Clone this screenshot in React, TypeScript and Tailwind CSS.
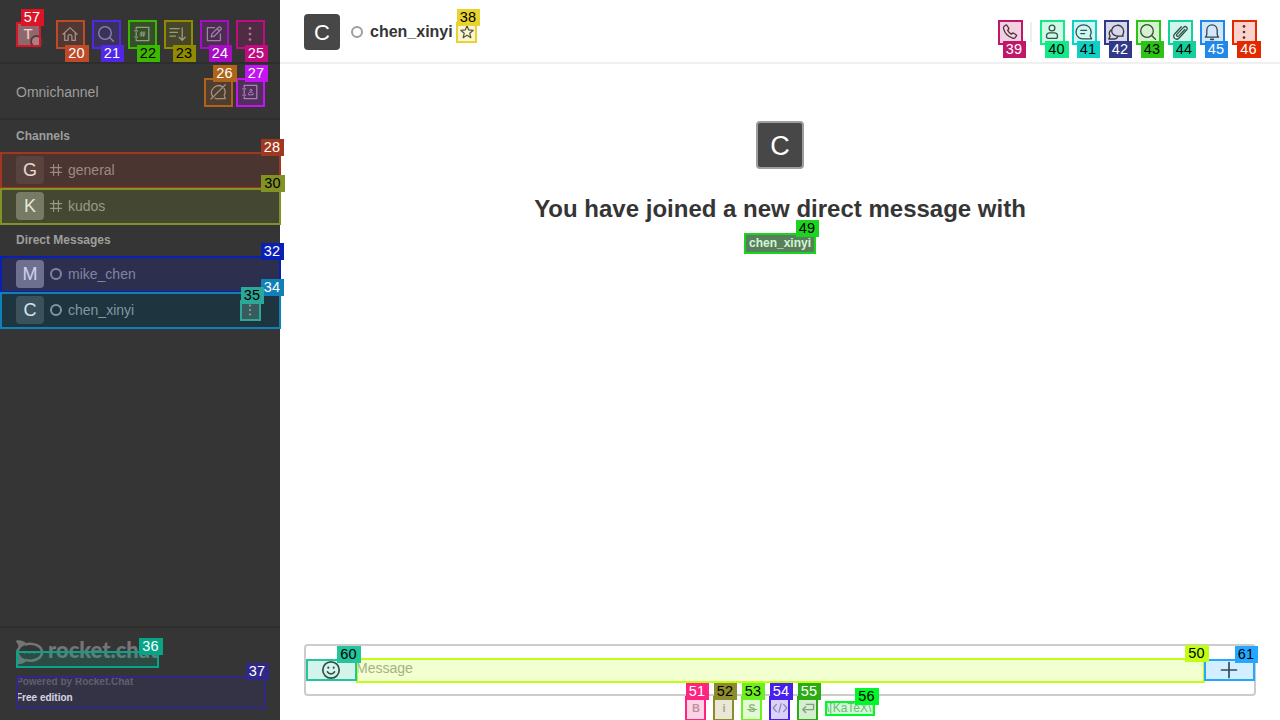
import type { ReactNode } from "react";

function Icon({ size = 20, width = 1.3, children }: { size?: number; width?: number; children: ReactNode }) {
  return (
    <svg
      width={size}
      height={size}
      viewBox="0 0 20 20"
      fill="none"
      stroke="currentColor"
      strokeWidth={width}
      strokeLinecap="round"
      strokeLinejoin="round"
      className="shrink-0"
    >
      {children}
    </svg>
  );
}

const Home = () => (
  <Icon>
    <path d="M3 10.2 10 3.6l7 6.6M4.7 8.8v7.6h3.4v-3.8a1.9 1.9 0 0 1 3.8 0v3.8h3.4V8.8" />
  </Icon>
);
const Search = () => (
  <Icon>
    <circle cx="9" cy="9" r="6.3" />
    <path d="m13.6 13.6 3.9 3.6" />
  </Icon>
);
const Directory = () => (
  <Icon>
    <path d="M4.2 5.2V3.4h12.6v13.2H4.2v-1.8M4.2 8.6v2.8M2.8 6.9h2.8M2.8 13.1h2.8" />
    <path d="M9.6 7.6 9.2 12.4M12 7.6l-.4 4.8M8.2 9h4.8M8 11h4.8" strokeWidth="1" />
  </Icon>
);
const Sort = () => (
  <Icon>
    <path d="M2 4.6h9.2M2 8.4h7.4M2 12.2h5.4M14.2 4v12.2M11.2 13.2l3 3 3-3" />
  </Icon>
);
const Edit = () => (
  <Icon>
    <path d="M10.5 3.6H3.4v13h13V10" />
    <path d="m7.2 12.8.8-3.2 6.6-6.4a1.3 1.3 0 0 1 1.9 0l.4.4a1.3 1.3 0 0 1 0 1.9L10.4 12l-3.2.8ZM13.2 4.8l2.2 2.2" />
  </Icon>
);
const Kebab = ({ size = 20 }: { size?: number }) => (
  <Icon size={size}>
    <g fill="currentColor" stroke="none">
      <circle cx="10" cy="4.4" r="1.35" />
      <circle cx="10" cy="10" r="1.35" />
      <circle cx="10" cy="15.6" r="1.35" />
    </g>
  </Icon>
);
const ChatOff = () => (
  <Icon>
    <path d="M14.3 4.6A7.2 7.2 0 0 0 4.6 14.6M16 6.4c1.4 2.200 1.400 4.800.2 7l1 3.200h-5.600c-1.800.5-3.200.3-4.600-.4M17.400 2.600 3 17" />
  </Icon>
);
const Contacts = () => (
  <Icon>
    <path d="M4.2 5.2V3.4h12.6v13.2H4.2v-1.8M4.2 8.6v2.8M2.8 6.9h2.8M2.8 13.1h2.8" />
    <circle cx="10.8" cy="8.3" r="1.100" strokeWidth="1" />
    <path d="M8.3 12.4c0-1.600 1-2.200 2.500-2.200s2.500.6 2.500 2.200Z" strokeWidth="1" />
  </Icon>
);
const Hash = () => (
  <Icon size={12} width={1.9}>
    <path d="M6 1v18M14 1v18M1 6h18M1 14h18" />
  </Icon>
);
const Phone = () => (
  <Icon>
    <path d="M4.2 4.2 5.6 3.2c.5-.3 1-.2 1.4.3l1.7 2.6c.3.5.2 1-.2 1.4l-.9.8c.7 1.6 2 2.9 3.8 3.9l.9-.9c.4-.4.9-.4 1.4-.1l2.4 1.6c.5.4.6.9.2 1.4l-1.1 1.5c-.5.6-1.2.8-2 .6C8.3 15 4.7 11.300 3.5 6.4c-.2-.9 0-1.700.7-2.200Z" />
  </Icon>
);
const Person = () => (
  <Icon>
    <circle cx="10" cy="6" r="2.9" />
    <path d="M4.500 14.200c0-2.300 1.200-3.400 3.200-3.400h4.600c2 0 3.200 1.100 3.200 3.400 0 1.500-.5 2.200-1.700 2.200H6.200c-1.200 0-1.700-.7-1.700-2.200Z" />
  </Icon>
);
const Threads = () => (
  <Icon>
    <path d="M17.600 16.800h-6.700c-4.800.7-8.900-2.200-8.900-6.700 0-4.200 3.300-7.300 7.600-7.300s7.600 3.100 7.600 7.300c0 1.400-.3 2.700-1.100 3.700l1.500 3ZM6.800 8.300h5.800M6.800 11.600h3.800" />
  </Icon>
);
const Discussion = () => (
  <Icon>
    <path d="M16.600 13.100c1.700-3.200 1-6.600-1.300-8.500-2.500-2-6.200-1.700-8.200.6-1.900 2.200-1.900 5.500.2 7.400 1.600 1.500 3.500 1.600 5.400 1.500h4.500l-.6-1Z" />
    <path d="M5 8c-1.600 1.400-2 4-.9 6l-1.300 3h5.300c1.600 0 2.800-.9 3.600-2.200" />
  </Icon>
);
const Clip = () => (
  <Icon>
    <path d="m14.800 7.500-6 6.400c-1.300 1.300-3-.2-1.900-1.500l6.600-7c2-2.200 5 .5 3 2.700l-7.400 7.900c-3 3.100-7.400-.8-4.500-4l6.700-7.200" />
  </Icon>
);
const Bell = () => (
  <Icon>
    <path d="M3.400 15.200h13.200c-1-1-1.400-1.700-1.400-3.200V8.200c0-3.100-2.100-5.400-5.200-5.400S4.800 5.100 4.800 8.200V12c0 1.500-.4 2.200-1.400 3.200Z" />
    <path d="M8.800 17.300h2.400" strokeWidth="1.800" />
  </Icon>
);
const Star = () => (
  <Icon size={16} width={1.500}>
    <path d="m10 2.200 2.200 5.200 5.600.5-4.300 3.700 1.300 5.600-4.800-3-4.800 3 1.300-5.600-4.300-3.700 5.600-.5L10 2.200Z" />
  </Icon>
);
const Smile = () => (
  <Icon width={1.700}>
    <circle cx="10" cy="10" r="8.200" />
    <path d="M6.500 11.800c1.400 2.700 5.600 2.700 7 0" />
    <path d="M7.300 7.400v.4M12.700 7.400v.4" strokeWidth="2" />
  </Icon>
);
const Plus = () => (
  <Icon width={1.700}>
    <path d="M10 2.500v15M2.500 10h15" />
  </Icon>
);
const Code = () => (
  <Icon size={16} width={1.500}>
    <path d="m5.500 5.500-4 4.500 4 4.500M14.500 5.500l4 4.500-4 4.500M11.500 4.500l-3 11" />
  </Icon>
);
const Enter = () => (
  <Icon size={16} width={1.800}>
    <path d="M8 5.500h9V12H4M7 8.500 3.500 12 7 15.500" />
  </Icon>
);

const Bullet = () => <span className="size-3 shrink-0 rounded-full border-2 border-[#9e9e9e]" />;

function IconButton({ children }: { children: ReactNode }) {
  return <button className="flex size-7 shrink-0 items-center justify-center">{children}</button>;
}
function ToolButton({ children }: { children: ReactNode }) {
  return <button className="flex size-6 shrink-0 items-center justify-center">{children}</button>;
}

function Row({ letter, tone, name, channel, active }: { letter: string; tone: string; name: string; channel?: boolean; active?: boolean }) {
  return (
    <li className={`flex h-9 items-center pl-4 pr-5 text-sm ${active ? "bg-[#222222]" : ""}`}>
      <span className={`flex size-7 shrink-0 items-center justify-center rounded text-[18px] leading-none text-white ${tone}`}>{letter}</span>
      <span className="mx-1.5 flex w-3 justify-center">{channel ? <Hash /> : <Bullet />}</span>
      <span className="flex-1">{name}</span>
      {active && (
        <button className="flex size-5 items-center justify-center rounded-xs bg-[#4a3a36] text-[#b4b4b4]">
          <Kebab size={16} />
        </button>
      )}
    </li>
  );
}

function Sidebar() {
  return (
    <aside className="flex w-[280px] shrink-0 flex-col bg-[#353535] text-[#9e9e9e]">
      <div className="flex h-16 shrink-0 items-start border-b-2 border-[#2d2d2d] pl-4 pt-5">
        <div className="relative mr-4 mt-0.5 flex size-6 items-center justify-center rounded-xs bg-[#7e7e7e] text-[15px] text-white">
          T
          <span className="absolute -bottom-[2px] -right-[3px] size-[13px] rounded-full border-2 border-[#404040] bg-[#9e9e9e]" />
        </div>
        <div className="flex gap-2">
          <IconButton><Home /></IconButton>
          <IconButton><Search /></IconButton>
          <IconButton><Directory /></IconButton>
          <IconButton><Sort /></IconButton>
          <IconButton><Edit /></IconButton>
          <IconButton><Kebab /></IconButton>
        </div>
      </div>
      <div className="flex h-14 shrink-0 items-center gap-1 border-b-2 border-[#2d2d2d] pl-4 pr-4 pt-0.5">
        <span className="flex-1 text-sm">Omnichannel</span>
        <IconButton><ChatOff /></IconButton>
        <IconButton><Contacts /></IconButton>
      </div>
      <nav className="flex-1">
        <h3 className="flex h-8 items-center pl-4 text-xs font-bold">Channels</h3>
        <ul>
          <Row letter="G" tone="bg-[#474747]" name="general" channel />
          <Row letter="K" tone="bg-[#757575]" name="kudos" channel />
        </ul>
        <h3 className="flex h-8 items-center pl-4 text-xs font-bold">Direct Messages</h3>
        <ul>
          <Row letter="M" tone="bg-[#868686]" name="mike_chen" />
          <Row letter="C" tone="bg-[#474747]" name="chen_xinyi" active />
        </ul>
      </nav>
      <footer className="h-[94px] shrink-0 border-t-2 border-[#2d2d2d] pl-4 pt-3">
        <div className="h-[34px] text-[#757575]">
          <svg width="150" height="28" viewBox="0 0 150 28">
            <path
              d="M1.500 1.500c3.500-.2 6 .9 8 2.900 8-2.200 16.500 1.600 16.500 7.800S17.500 22.300 9.500 20c-2 2-4.500 3-8 2.900C3.400 21 4 19 3.500 16.800c-2.600-2.900-2.600-6.400 0-9.300C4 5.200 3.400 3.300 1.500 1.500Z"
              fill="none"
              stroke="currentColor"
              strokeWidth="2.600"
              strokeLinejoin="round"
            />
            <path d="M.5.8c4-.3 7.200 1 9 3.800L4.300 8C4.400 5 3 2.500.5.800ZM.5 23.600c4 .3 7.200-1 9-3.800l-5.200-3.400c.1 3-1.300 5.500-3.800 7.200Z" fill="currentColor" />
            <g fill="currentColor">
              <circle cx="9" cy="12.300" r="1.400" />
              <circle cx="13.700" cy="12.300" r="1.400" />
              <circle cx="18.400" cy="12.300" r="1.400" />
            </g>
            <text x="32" y="18" textLength="110" lengthAdjust="spacingAndGlyphs" fill="currentColor" fontFamily="Lato, sans-serif" fontWeight="900" fontSize="22.500">
              rocket.chat
            </text>
          </svg>
        </div>
        <p className="text-[10px] font-bold leading-4 text-[#6c6c6c]">Powered by Rocket.Chat</p>
        <p className="text-[10px] font-bold leading-4 text-white">Free edition</p>
      </footer>
    </aside>
  );
}

function Room() {
  return (
    <main className="flex min-w-0 flex-1 flex-col bg-white text-[#353535]">
      <header className="flex h-16 shrink-0 items-center border-b-2 border-[#f0f0f0] px-6 pt-0.5">
        <div className="flex size-9 items-center justify-center rounded bg-[#474747] pt-px text-[22px] leading-none text-white">C</div>
        <span className="ml-[11px] mr-[7px] flex"><Bullet /></span>
        <h1 className="text-base font-bold">chen_xinyi</h1>
        <button className="ml-1 flex size-5 items-center justify-center"><Star /></button>
        <div className="ml-auto flex items-center">
          <ToolButton><Phone /></ToolButton>
          <span className="ml-2 mr-2 h-5 w-0.5 bg-[#eeeeee]" />
          <div className="flex gap-2">
            <ToolButton><Person /></ToolButton>
            <ToolButton><Threads /></ToolButton>
            <ToolButton><Discussion /></ToolButton>
            <ToolButton><Search /></ToolButton>
            <ToolButton><Clip /></ToolButton>
            <ToolButton><Bell /></ToolButton>
            <ToolButton><Kebab /></ToolButton>
          </div>
        </div>
      </header>
      <section className="flex flex-1 flex-col items-center pt-[57px]">
        <div className="flex size-12 items-center justify-center rounded border-2 border-[#9e9e9e] bg-[#474747] pt-0.5 text-[27px] leading-none text-white">C</div>
        <h2 className="mt-6 text-2xl font-bold leading-8">You have joined a new direct message with</h2>
        <span className="mt-2 flex h-5 w-[71px] items-center justify-center bg-[#666b6b] text-xs font-bold text-white">chen_xinyi</span>
      </section>
      <footer className="flex h-[76px] shrink-0 flex-col px-6">
        <div className="flex h-[52px] shrink-0 items-center rounded border-2 border-[#cccccc]">
          <button className="flex w-[50px] justify-center"><Smile /></button>
          <span className="flex-1 pb-1 text-sm text-[#9e9e9e]">Message</span>
          <button className="flex w-[50px] justify-center"><Plus /></button>
        </div>
        <div className="flex h-6 items-center gap-2 pl-[382px] text-xs text-[#9e9e9e]">
          <span className="flex w-5 justify-center text-[11px] font-bold text-[#adadad]">B</span>
          <span className="flex w-5 justify-center text-[11px] font-bold text-[#adadad]">i</span>
          <span className="relative flex w-5 items-center justify-center text-[11px] font-bold text-[#a6a6a6]">
            S
            <span className="absolute left-[5px] top-2 h-px w-[10px] bg-[#9e9e9e]" />
          </span>
          <span className="flex w-5 justify-center"><Code /></span>
          <span className="flex w-5 justify-center"><Enter /></span>
          <span>\[KaTeX\]</span>
        </div>
      </footer>
    </main>
  );
}

type Mark = { id: number; x: number; y: number; w: number; h: number; color: string; dark?: boolean; below?: boolean };

const marks: Mark[] = [
  { id: 20, x: 56, y: 20, w: 29, h: 29, color: "#c04a28", below: true },
  { id: 21, x: 92, y: 20, w: 29, h: 29, color: "#5228e8", below: true },
  { id: 22, x: 128, y: 20, w: 29, h: 29, color: "#3cb800", dark: true, below: true },
  { id: 23, x: 164, y: 20, w: 29, h: 29, color: "#908c00", dark: true, below: true },
  { id: 24, x: 200, y: 20, w: 29, h: 29, color: "#a80cc4", below: true },
  { id: 25, x: 236, y: 20, w: 29, h: 29, color: "#c00c80", below: true },
  { id: 26, x: 204, y: 78, w: 29, h: 29, color: "#b0641a" },
  { id: 27, x: 236, y: 78, w: 29, h: 29, color: "#c414f4" },
  { id: 28, x: 0, y: 152, w: 281, h: 37, color: "#a03820" },
  { id: 30, x: 0, y: 188, w: 281, h: 37, color: "#829224", dark: true },
  { id: 32, x: 0, y: 256, w: 281, h: 37, color: "#0a20b4" },
  { id: 34, x: 0, y: 292, w: 281, h: 37, color: "#1080b8" },
  { id: 35, x: 240, y: 300, w: 21, h: 21, color: "#2ca898", dark: true },
  { id: 36, x: 16, y: 651, w: 143, h: 17, color: "#08a488" },
  { id: 37, x: 16, y: 676, w: 250, h: 33, color: "#302888" },
  { id: 38, x: 456, y: 22, w: 21, h: 21, color: "#e8d42c", dark: true },
  { id: 39, x: 998, y: 20, w: 25, h: 25, color: "#c01868", below: true },
  { id: 40, x: 1040, y: 20, w: 25, h: 25, color: "#14e888", dark: true, below: true },
  { id: 41, x: 1072, y: 20, w: 25, h: 25, color: "#10d0c4", dark: true, below: true },
  { id: 42, x: 1104, y: 20, w: 25, h: 25, color: "#303888", below: true },
  { id: 43, x: 1136, y: 20, w: 25, h: 25, color: "#2cc414", dark: true, below: true },
  { id: 44, x: 1168, y: 20, w: 25, h: 25, color: "#14d09c", dark: true, below: true },
  { id: 45, x: 1200, y: 20, w: 25, h: 25, color: "#2088e8", below: true },
  { id: 46, x: 1232, y: 20, w: 25, h: 25, color: "#e42800", below: true },
  { id: 49, x: 744, y: 233, w: 72, h: 21, color: "#1cd420", dark: true },
  { id: 50, x: 356, y: 658, w: 849, h: 25, color: "#c0ff14", dark: true },
  { id: 51, x: 685, y: 696, w: 21, h: 25, color: "#ff2480" },
  { id: 52, x: 713, y: 696, w: 21, h: 25, color: "#8c8c2c", dark: true },
  { id: 53, x: 741, y: 696, w: 21, h: 25, color: "#6cf020", dark: true },
  { id: 54, x: 769, y: 696, w: 21, h: 25, color: "#4820ec" },
  { id: 55, x: 797, y: 696, w: 21, h: 25, color: "#2cac14" },
  { id: 56, x: 825, y: 701, w: 50, h: 15, color: "#00f828", dark: true },
  { id: 57, x: 16, y: 22, w: 25, h: 25, color: "#dc1428" },
  { id: 60, x: 306, y: 659, w: 51, h: 22, color: "#24c49c", dark: true },
  { id: 61, x: 1204, y: 659, w: 51, h: 22, color: "#24a8ff", dark: true },
];

function Marks() {
  return (
    <div className="pointer-events-none absolute inset-0 overflow-hidden">
      {marks.map((m) => (
        <div
          key={m.id}
          className="absolute border-2"
          style={{ left: m.x, top: m.y, width: m.w, height: m.h, borderColor: m.color, backgroundColor: `${m.color}33` }}
        />
      ))}
      {marks.map((m) => (
        <span
          key={m.id}
          className={`absolute flex h-[17px] items-center justify-center pr-px text-[14.5px] leading-none tracking-[0.3px] ${m.dark ? "text-black" : "text-white"}`}
          style={{
            left: m.x + m.w - 20,
            top: m.below ? m.y + m.h - 4 : m.y - 13,
            width: m.id % 10 === 0 || m.id % 10 === 6 ? 24 : 23,
            backgroundColor: m.color,
          }}
        >
          {m.id}
        </span>
      ))}
    </div>
  );
}

export default function App() {
  return (
    <div className="relative flex h-[720px] w-[1280px] overflow-hidden font-['Liberation_Sans',Arial,sans-serif]">
      <Sidebar />
      <Room />
      <Marks />
    </div>
  );
}
